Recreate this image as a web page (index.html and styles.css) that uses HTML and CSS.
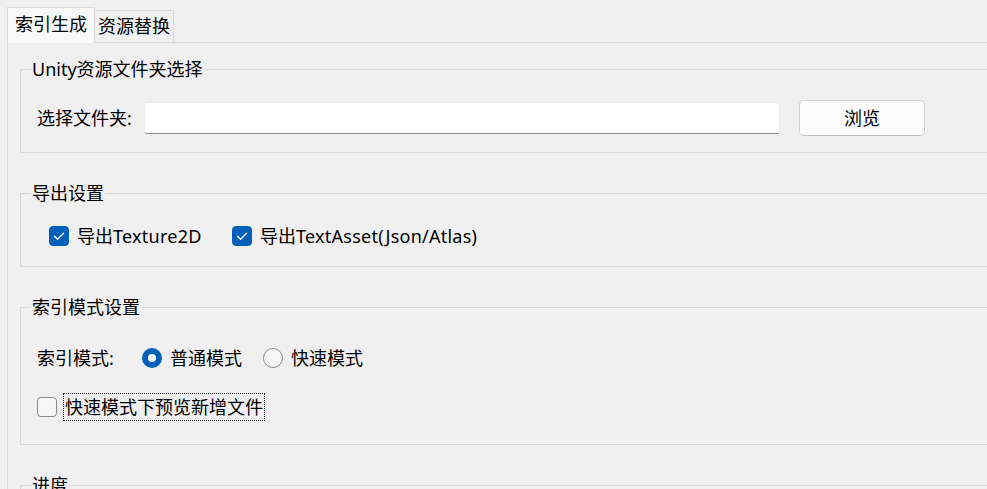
FILE: index.html
```html
<!DOCTYPE html>
<html lang="zh-CN">
<head>
<meta charset="utf-8">
<title>索引生成</title>
<link rel="stylesheet" href="styles.css">
</head>
<body>
<div class="window">
  <div class="tabs">
    <div class="tab active">索引生成</div>
    <div class="tab">资源替换</div>
  </div>
  <div class="panel">
    <fieldset class="group">
      <legend>Unity资源文件夹选择</legend>
      <div class="body body-folder">
        <span class="label label-folder">选择文件夹:</span>
        <div class="textbox"></div>
        <div class="button">浏览</div>
      </div>
    </fieldset>

    <fieldset class="group">
      <legend>导出设置</legend>
      <div class="body body-export">
        <div class="check-item export-first">
          <span class="checkbox checked">
            <svg width="20" height="20" viewBox="0 0 20 20"><path d="M5.5 10.2 L8.6 13.2 L14.6 7.2" fill="none" stroke="#fff" stroke-width="1.3" stroke-linecap="round" stroke-linejoin="round"/></svg>
          </span>
          <span>导出<span class="latin">Texture2D</span></span>
        </div>
        <div class="check-item">
          <span class="checkbox checked">
            <svg width="20" height="20" viewBox="0 0 20 20"><path d="M5.5 10.2 L8.6 13.2 L14.6 7.2" fill="none" stroke="#fff" stroke-width="1.3" stroke-linecap="round" stroke-linejoin="round"/></svg>
          </span>
          <span>导出<span class="latin">TextAsset(Json/Atlas)</span></span>
        </div>
      </div>
    </fieldset>

    <fieldset class="group">
      <legend>索引模式设置</legend>
      <div class="body body-mode">
        <div class="mode-row">
          <span class="label label-mode">索引模式:</span>
          <div class="radio-item radio-first">
            <span class="radio selected"></span>
            <span>普通模式</span>
          </div>
          <div class="radio-item">
            <span class="radio"></span>
            <span>快速模式</span>
          </div>
        </div>
        <div class="preview-row">
          <span class="checkbox"></span>
          <span class="focus-text">快速模式下预览新增文件</span>
        </div>
      </div>
    </fieldset>

    <fieldset class="group">
      <legend>进度</legend>
      <div class="body body-progress"></div>
    </fieldset>
  </div>
</div>
</body>
</html>
```

FILE: styles.css
```css
html, body {
  margin: 0;
  padding: 0;
}

body {
  background: #f0f0f0;
  overflow: hidden;
  font-family: "Noto Sans", "Noto Sans CJK SC", sans-serif;
  font-size: 18px;
  line-height: 24px;
  color: #000000;
}

.latin {
  letter-spacing: 0.25px;
}

.window {
  width: 1120px;
}

.tabs {
  display: flex;
  align-items: flex-end;
  padding: 7px 0 0 7px;
  height: 35px;
}

.tab {
  box-sizing: border-box;
  height: 32px;
  padding: 3px 3px 0 3px;
  border-top: 1px solid #d9d9d9;
  border-right: 1px solid #d9d9d9;
  background: #f0f0f0;
  white-space: nowrap;
}

.tab.active {
  height: 36px;
  margin-bottom: -1px;
  padding: 4px 7px 0 7px;
  border-left: 1px solid #d9d9d9;
  background: #f9f9f9;
  position: relative;
  z-index: 1;
}

.panel {
  margin-left: 7px;
  border: 1px solid #dadada;
  padding: 14px 12px 0 12px;
  height: 460px;
}

.group {
  margin: 0 0 28px 0;
  padding: 0;
  border: 1px solid #d9d9d9;
  min-width: 0;
}

.group legend {
  margin-left: 10px;
  padding: 0 1px;
  line-height: 24px;
}

.body {
  display: flex;
  align-items: center;
}

.body-folder {
  padding: 19px 16px 16px 16px;
}

.label-folder {
  width: 107px;
  flex: none;
}

.textbox {
  box-sizing: border-box;
  width: 636px;
  height: 32px;
  background: #ffffff;
  border: 1px solid #ececec;
  border-bottom: 1px solid #8f8f8f;
  border-radius: 3px;
  flex: none;
}

.button {
  box-sizing: border-box;
  margin-left: 19px;
  width: 126px;
  height: 36px;
  display: flex;
  align-items: center;
  justify-content: center;
  background: #fdfdfd;
  border: 1px solid #d3d3d3;
  border-bottom-color: #bdbdbd;
  border-radius: 5px;
  flex: none;
}

.body-export {
  padding: 19px 16px 18px 28px;
}

.check-item {
  display: flex;
  align-items: center;
  height: 24px;
}

.export-first {
  width: 183px;
  flex: none;
}

.checkbox {
  box-sizing: border-box;
  width: 20px;
  height: 20px;
  border-radius: 4px;
  margin-right: 8px;
  flex: none;
  border: 1px solid #8a8a8a;
  background: #f6f6f6;
  display: block;
}

.checkbox.checked {
  background: #005fb8;
  border-color: #005fb8;
  position: relative;
}

.checkbox.checked svg {
  display: block;
  margin: -1px;
}

.body-mode {
  flex-direction: column;
  align-items: stretch;
  padding: 27px 16px 23px 16px;
}

.mode-row {
  display: flex;
  align-items: center;
  height: 24px;
}

.label-mode {
  width: 105px;
  flex: none;
}

.radio-item {
  display: flex;
  align-items: center;
}

.radio-first {
  width: 121px;
  flex: none;
}

.radio {
  box-sizing: border-box;
  width: 20px;
  height: 20px;
  border-radius: 50%;
  border: 1px solid #8a8a8a;
  background: #f6f6f6;
  margin-right: 8px;
  flex: none;
}

.radio.selected {
  border: 6px solid #005fb8;
  background: #ffffff;
}

.preview-row {
  display: flex;
  align-items: center;
  height: 28px;
  margin-top: 23px;
}

.preview-row .checkbox {
  margin-right: 6px;
}

.focus-text {
  box-sizing: border-box;
  height: 28px;
  padding: 1px 1px 0 1px;
  border: 1px dotted #222;
}

.body-progress {
  height: 60px;
}
```
